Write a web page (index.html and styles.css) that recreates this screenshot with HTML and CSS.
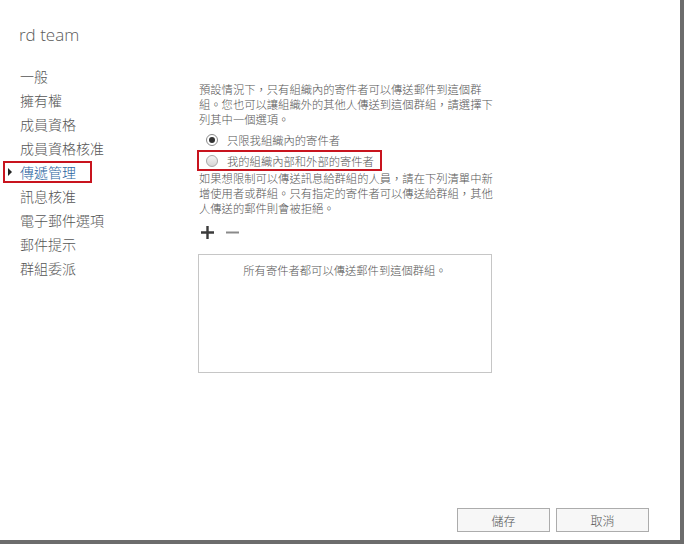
FILE: index.html
```html
<!DOCTYPE html>
<html>
<head>
    <title>rd team - 傳遞管理</title>
    <link rel="stylesheet" href="styles.css">
</head>
<body>
    <div class="frame">
        <div class="header">rd team</div>

        <div class="main">
            <ul class="nav">
                <li>一般</li>
                <li>擁有權</li>
                <li>成員資格</li>
                <li>成員資格核准</li>
                <li class="active">傳遞管理</li>
                <li>訊息核准</li>
                <li>電子郵件選項</li>
                <li>郵件提示</li>
                <li>群組委派</li>
            </ul>

            <div class="content">
                <p class="text">預設情況下，只有組織內的寄件者可以傳送郵件到這個群<br>組。您也可以讓組織外的其他人傳送到這個群組，請選擇下<br>列其中一個選項。</p>

                <div class="radio-row">
                    <span class="radio checked"></span>
                    <span>只限我組織內的寄件者</span>
                </div>
                <div class="radio-row marked">
                    <span class="radio"></span>
                    <span>我的組織內部和外部的寄件者</span>
                </div>

                <p class="text">如果想限制可以傳送訊息給群組的人員，請在下列清單中新<br>增使用者或群組。只有指定的寄件者可以傳送給群組，其他<br>人傳送的郵件則會被拒絕。</p>

                <div class="tools">
                    <svg class="tool" width="15" height="15" viewBox="0 0 15 15">
                        <path d="M7.5 1v13M1 7.5h13" stroke="#3b3b3b" stroke-width="2.4"/>
                    </svg>
                    <svg class="tool" width="15" height="15" viewBox="0 0 15 15">
                        <path d="M1 7.5h13" stroke="#8a8a8a" stroke-width="2"/>
                    </svg>
                </div>

                <div class="list-box">所有寄件者都可以傳送郵件到這個群組。</div>
            </div>
        </div>

        <div class="footer">
            <button>儲存</button>
            <button>取消</button>
        </div>
    </div>
</body>
</html>
```

FILE: styles.css
```css
html, body {
    margin: 0;
    padding: 0;
    background-color: #fff;
    font-family: "Noto Sans CJK TC", "Noto Sans", sans-serif;
    color: #444;
}

.frame {
    width: 680px;
    height: 540px;
    border-right: 4px solid #6c6c6c;
    border-bottom: 4px solid #6c6c6c;
    background-color: #fff;
    display: flex;
    flex-direction: column;
}

.header {
    padding: 25px 0 0 19px;
    font-family: "Open Sans", "Noto Sans", sans-serif;
    font-weight: 300;
    font-size: 17px;
    line-height: 20px;
    color: #5a5a5a;
}

.main {
    display: flex;
}

/* left navigation */
.nav {
    list-style: none;
    margin: 19px 0 0 0;
    padding: 0;
    width: 199px;
}

.nav li {
    font-size: 14px;
    font-weight: 300;
    line-height: 24px;
    padding-left: 20px;
    color: #555;
    white-space: nowrap;
}

.nav li.active {
    position: relative;
    width: max-content;
    margin: 1px 0 1px 3px;
    padding: 0 14px 0 15px;
    line-height: 18px;
    border: 2px solid #c8141e;
    color: #2a64a0;
}

.nav li.active::before {
    content: "";
    position: absolute;
    left: 3px;
    top: 5px;
    border-top: 4px solid transparent;
    border-bottom: 4px solid transparent;
    border-left: 4px solid #222;
}

/* right content */
.content {
    padding-top: 37px;
    width: 300px;
}

.text {
    margin: 0;
    font-size: 11.3px;
    font-weight: 300;
    line-height: 15px;
    color: #555;
    white-space: nowrap;
}

.radio-row {
    display: flex;
    align-items: center;
    gap: 9px;
    height: 20px;
    margin-top: 3px;
    padding-left: 7px;
    font-size: 11.3px;
    font-weight: 300;
    color: #555;
    white-space: nowrap;
}

.radio-row.marked {
    width: max-content;
    height: 17px;
    margin: 0 0 0 -2px;
    padding: 0 6px 0 7px;
    border: 2px solid #c8141e;
}

.radio {
    box-sizing: border-box;
    width: 12px;
    height: 12px;
    border-radius: 50%;
    border: 1px solid #a8a8a8;
    background: linear-gradient(#f4f4f4, #d6d6d6);
    display: flex;
    align-items: center;
    justify-content: center;
}

.radio.checked {
    background: #fff;
    border-color: #8a8a8a;
}

.radio.checked::after {
    content: "";
    width: 6px;
    height: 6px;
    border-radius: 50%;
    background-color: #333;
}

.tools {
    display: flex;
    gap: 10px;
    margin: 8px 0 0 1px;
    height: 16px;
    align-items: center;
}

.list-box {
    box-sizing: border-box;
    width: 294px;
    height: 119px;
    margin: 14px 0 0 -1px;
    border: 1px solid #c6c6c6;
    padding-top: 8px;
    text-align: center;
    font-size: 11.3px;
    font-weight: 300;
    line-height: 15px;
    color: #555;
}

/* bottom buttons */
.footer {
    margin-top: auto;
    display: flex;
    justify-content: flex-end;
    gap: 6px;
    padding: 0 31px 8px 0;
}

.footer button {
    width: 93px;
    height: 24px;
    border: 1px solid #acacac;
    background-color: #f7f7f7;
    font-family: "Noto Sans CJK TC", sans-serif;
    font-size: 12px;
    font-weight: 300;
    color: #555;
    padding: 0;
}
```
